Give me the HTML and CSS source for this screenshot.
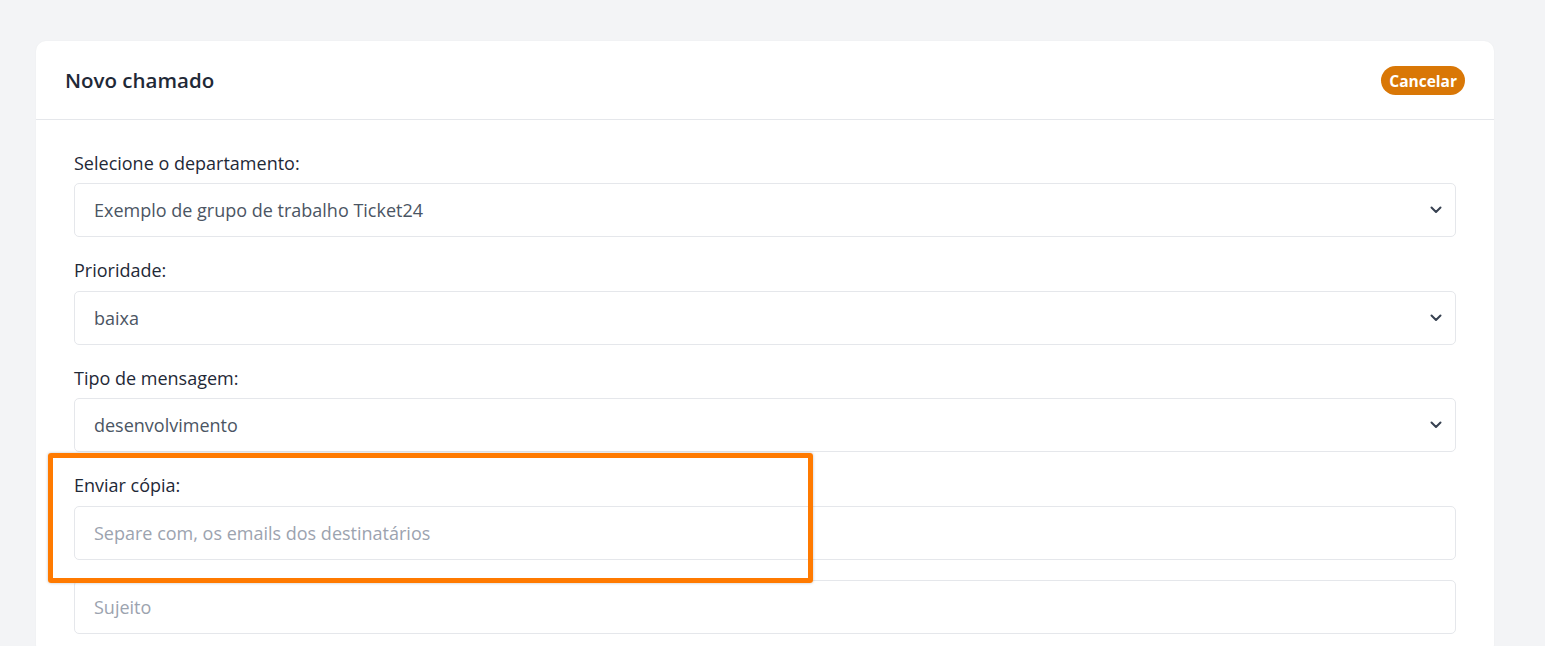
FILE: index.html
```html
<!DOCTYPE html>
<html lang="pt">
<head>
<meta charset="utf-8">
<title>Novo chamado</title>
<link rel="stylesheet" href="styles.css">
</head>
<body>
<div class="page">
  <div class="card">
    <div class="card-header">
      <h1 class="title">Novo chamado</h1>
      <button class="btn-cancel">Cancelar</button>
    </div>
    <div class="card-body">
      <div class="group">
        <label class="label">Selecione o departamento:</label>
        <div class="select">
          <span class="value">Exemplo de grupo de trabalho Ticket24</span>
          <svg class="chev" width="12" height="8" viewBox="0 0 12 8"><path d="M1.5 1.5 L6 6 L10.5 1.5" fill="none" stroke="#374151" stroke-width="2" stroke-linecap="round" stroke-linejoin="round"/></svg>
        </div>
      </div>
      <div class="group">
        <label class="label">Prioridade:</label>
        <div class="select">
          <span class="value">baixa</span>
          <svg class="chev" width="12" height="8" viewBox="0 0 12 8"><path d="M1.5 1.5 L6 6 L10.5 1.5" fill="none" stroke="#374151" stroke-width="2" stroke-linecap="round" stroke-linejoin="round"/></svg>
        </div>
      </div>
      <div class="group">
        <label class="label">Tipo de mensagem:</label>
        <div class="select">
          <span class="value">desenvolvimento</span>
          <svg class="chev" width="12" height="8" viewBox="0 0 12 8"><path d="M1.5 1.5 L6 6 L10.5 1.5" fill="none" stroke="#374151" stroke-width="2" stroke-linecap="round" stroke-linejoin="round"/></svg>
        </div>
      </div>
      <div class="group highlight-wrap">
        <div class="highlight"></div>
        <label class="label">Enviar cópia:</label>
        <div class="input"><span class="placeholder">Separe com, os emails dos destinatários</span></div>
      </div>
      <div class="group">
        <div class="input"><span class="placeholder">Sujeito</span></div>
      </div>
    </div>
  </div>
</div>
</body>
</html>
```

FILE: styles.css
```css
html, body {
  margin: 0;
  padding: 0;
  background: #f3f4f6;
  font-family: "Open Sans", "Noto Sans", sans-serif;
  overflow: hidden;
  height: 646px;
}
.page {
  padding: 41px 51px 0 36px;
}
.card {
  background: #ffffff;
  border-radius: 10px;
  box-shadow: 0 0 2px rgba(0,0,0,0.04);
}
.card-header {
  height: 78px;
  border-bottom: 1px solid #e5e7eb;
  display: flex;
  align-items: center;
  justify-content: space-between;
  padding: 0 29px;
}
.title {
  margin: 0;
  font-size: 20.5px;
  font-weight: 600;
  color: #1f2937;
  letter-spacing: 0;
}
.btn-cancel {
  background: #d97706;
  color: #fff;
  border: none;
  border-radius: 15px;
  height: 29px;
  padding: 0 8px;
  font-family: inherit;
  font-size: 15.5px;
  font-weight: 700;
  margin-top: 1px;
}
.card-body {
  padding: 29.5px 38px 20px 38px;
  display: flex;
  flex-direction: column;
  gap: 20px;
}
.group {
  display: flex;
  flex-direction: column;
}
.label {
  font-size: 18px;
  line-height: 27px;
  color: #1f2937;
  margin-bottom: 6.5px;
}
.select, .input {
  height: 54px;
  box-sizing: border-box;
  border: 1px solid #e5e7eb;
  border-radius: 5px;
  display: flex;
  align-items: center;
  justify-content: space-between;
  padding: 0 13px 0 19px;
  font-size: 18px;
}
.value {
  color: #4b5563;
}
.placeholder {
  color: #9ca3af;
}
.chev {
  display: block;
}
.highlight-wrap {
  position: relative;
}
.highlight {
  position: absolute;
  left: -26px;
  top: -19px;
  width: 765px;
  height: 130px;
  box-sizing: border-box;
  border: 5px solid #ff7a00;
  border-radius: 3px;
  box-shadow: 0 0 3px rgba(0,0,0,0.25);
  pointer-events: none;
}
```
